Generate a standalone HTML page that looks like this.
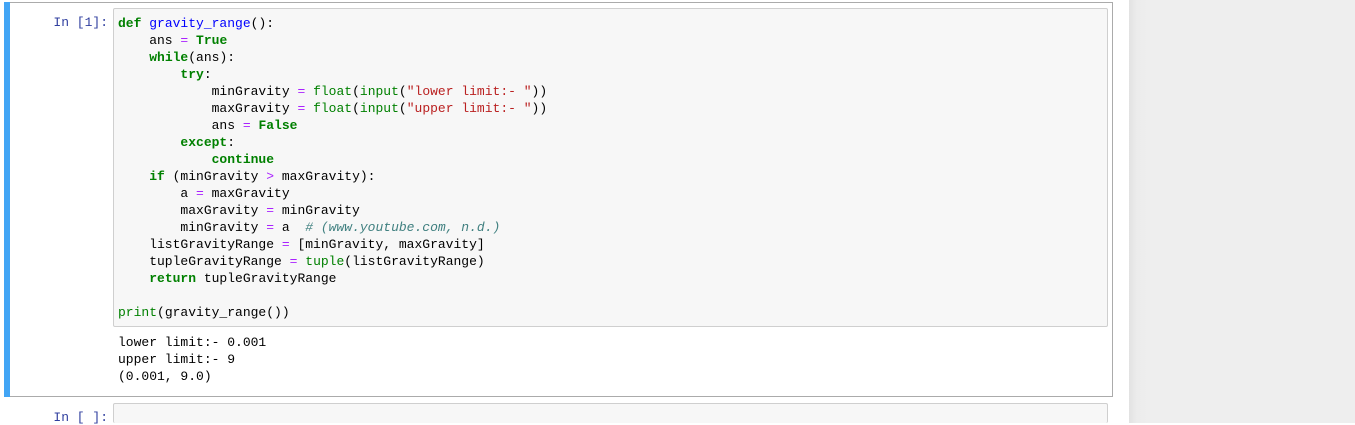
<!DOCTYPE html>
<html><head><style>
html,body{margin:0;padding:0;width:1355px;height:423px;overflow:hidden;background:#fff;}
.side{position:absolute;left:1129px;top:0;width:226px;height:423px;background:linear-gradient(to right,#e2e2e2 0px,#ececec 8px,#eee 20px);}
.cell{position:absolute;left:4px;top:2px;width:1108px;height:393px;border:1px solid #ababab;border-left:none;}
.bar{position:absolute;left:4px;top:2px;width:6px;height:395px;background:#42a5f5;}
.prompt{position:absolute;font:13px "Liberation Mono",monospace;color:#303f9f;text-align:right;width:108px;left:0;}
.inp{position:absolute;left:113px;width:993px;background:#f7f7f7;border:1px solid #cfcfcf;border-radius:2px;}
pre{margin:0;font:13px/17px "Liberation Mono",monospace;color:#000;}
.k{color:#008000;font-weight:bold}.b{color:#008000}.o{color:#aa22ff}.s{color:#ba2121}.f{color:#0000ff}.c{color:#408080;font-style:italic}
</style></head><body>
<div class="side"></div>
<div class="cell"></div>
<div class="bar"></div>
<div class="prompt" style="top:15px">In&nbsp;[1]:</div>
<div class="inp" style="top:8px;height:317px"><pre style="padding:6px 0 0 4px"><span class="k">def</span> <span class="f">gravity_range</span>():
    ans <span class="o">=</span> <span class="k">True</span>
    <span class="k">while</span>(ans):
        <span class="k">try</span>:
            minGravity <span class="o">=</span> <span class="b">float</span>(<span class="b">input</span>(<span class="s">"lower limit:- "</span>))
            maxGravity <span class="o">=</span> <span class="b">float</span>(<span class="b">input</span>(<span class="s">"upper limit:- "</span>))
            ans <span class="o">=</span> <span class="k">False</span>
        <span class="k">except</span>:
            <span class="k">continue</span>
    <span class="k">if</span> (minGravity <span class="o">&gt;</span> maxGravity):
        a <span class="o">=</span> maxGravity
        maxGravity <span class="o">=</span> minGravity
        minGravity <span class="o">=</span> a  <span class="c"># (www.youtube.com, n.d.)</span>
    listGravityRange <span class="o">=</span> [minGravity, maxGravity]
    tupleGravityRange <span class="o">=</span> <span class="b">tuple</span>(listGravityRange)
    <span class="k">return</span> tupleGravityRange

<span class="b">print</span>(gravity_range())</pre></div>
<pre style="position:absolute;left:118px;top:334px">lower limit:- 0.001
upper limit:- 9
(0.001, 9.0)</pre>
<div class="prompt" style="top:410px">In&nbsp;[&nbsp;]:</div>
<div class="inp" style="top:403px;height:19px;border-bottom:none"></div>
</body></html>
